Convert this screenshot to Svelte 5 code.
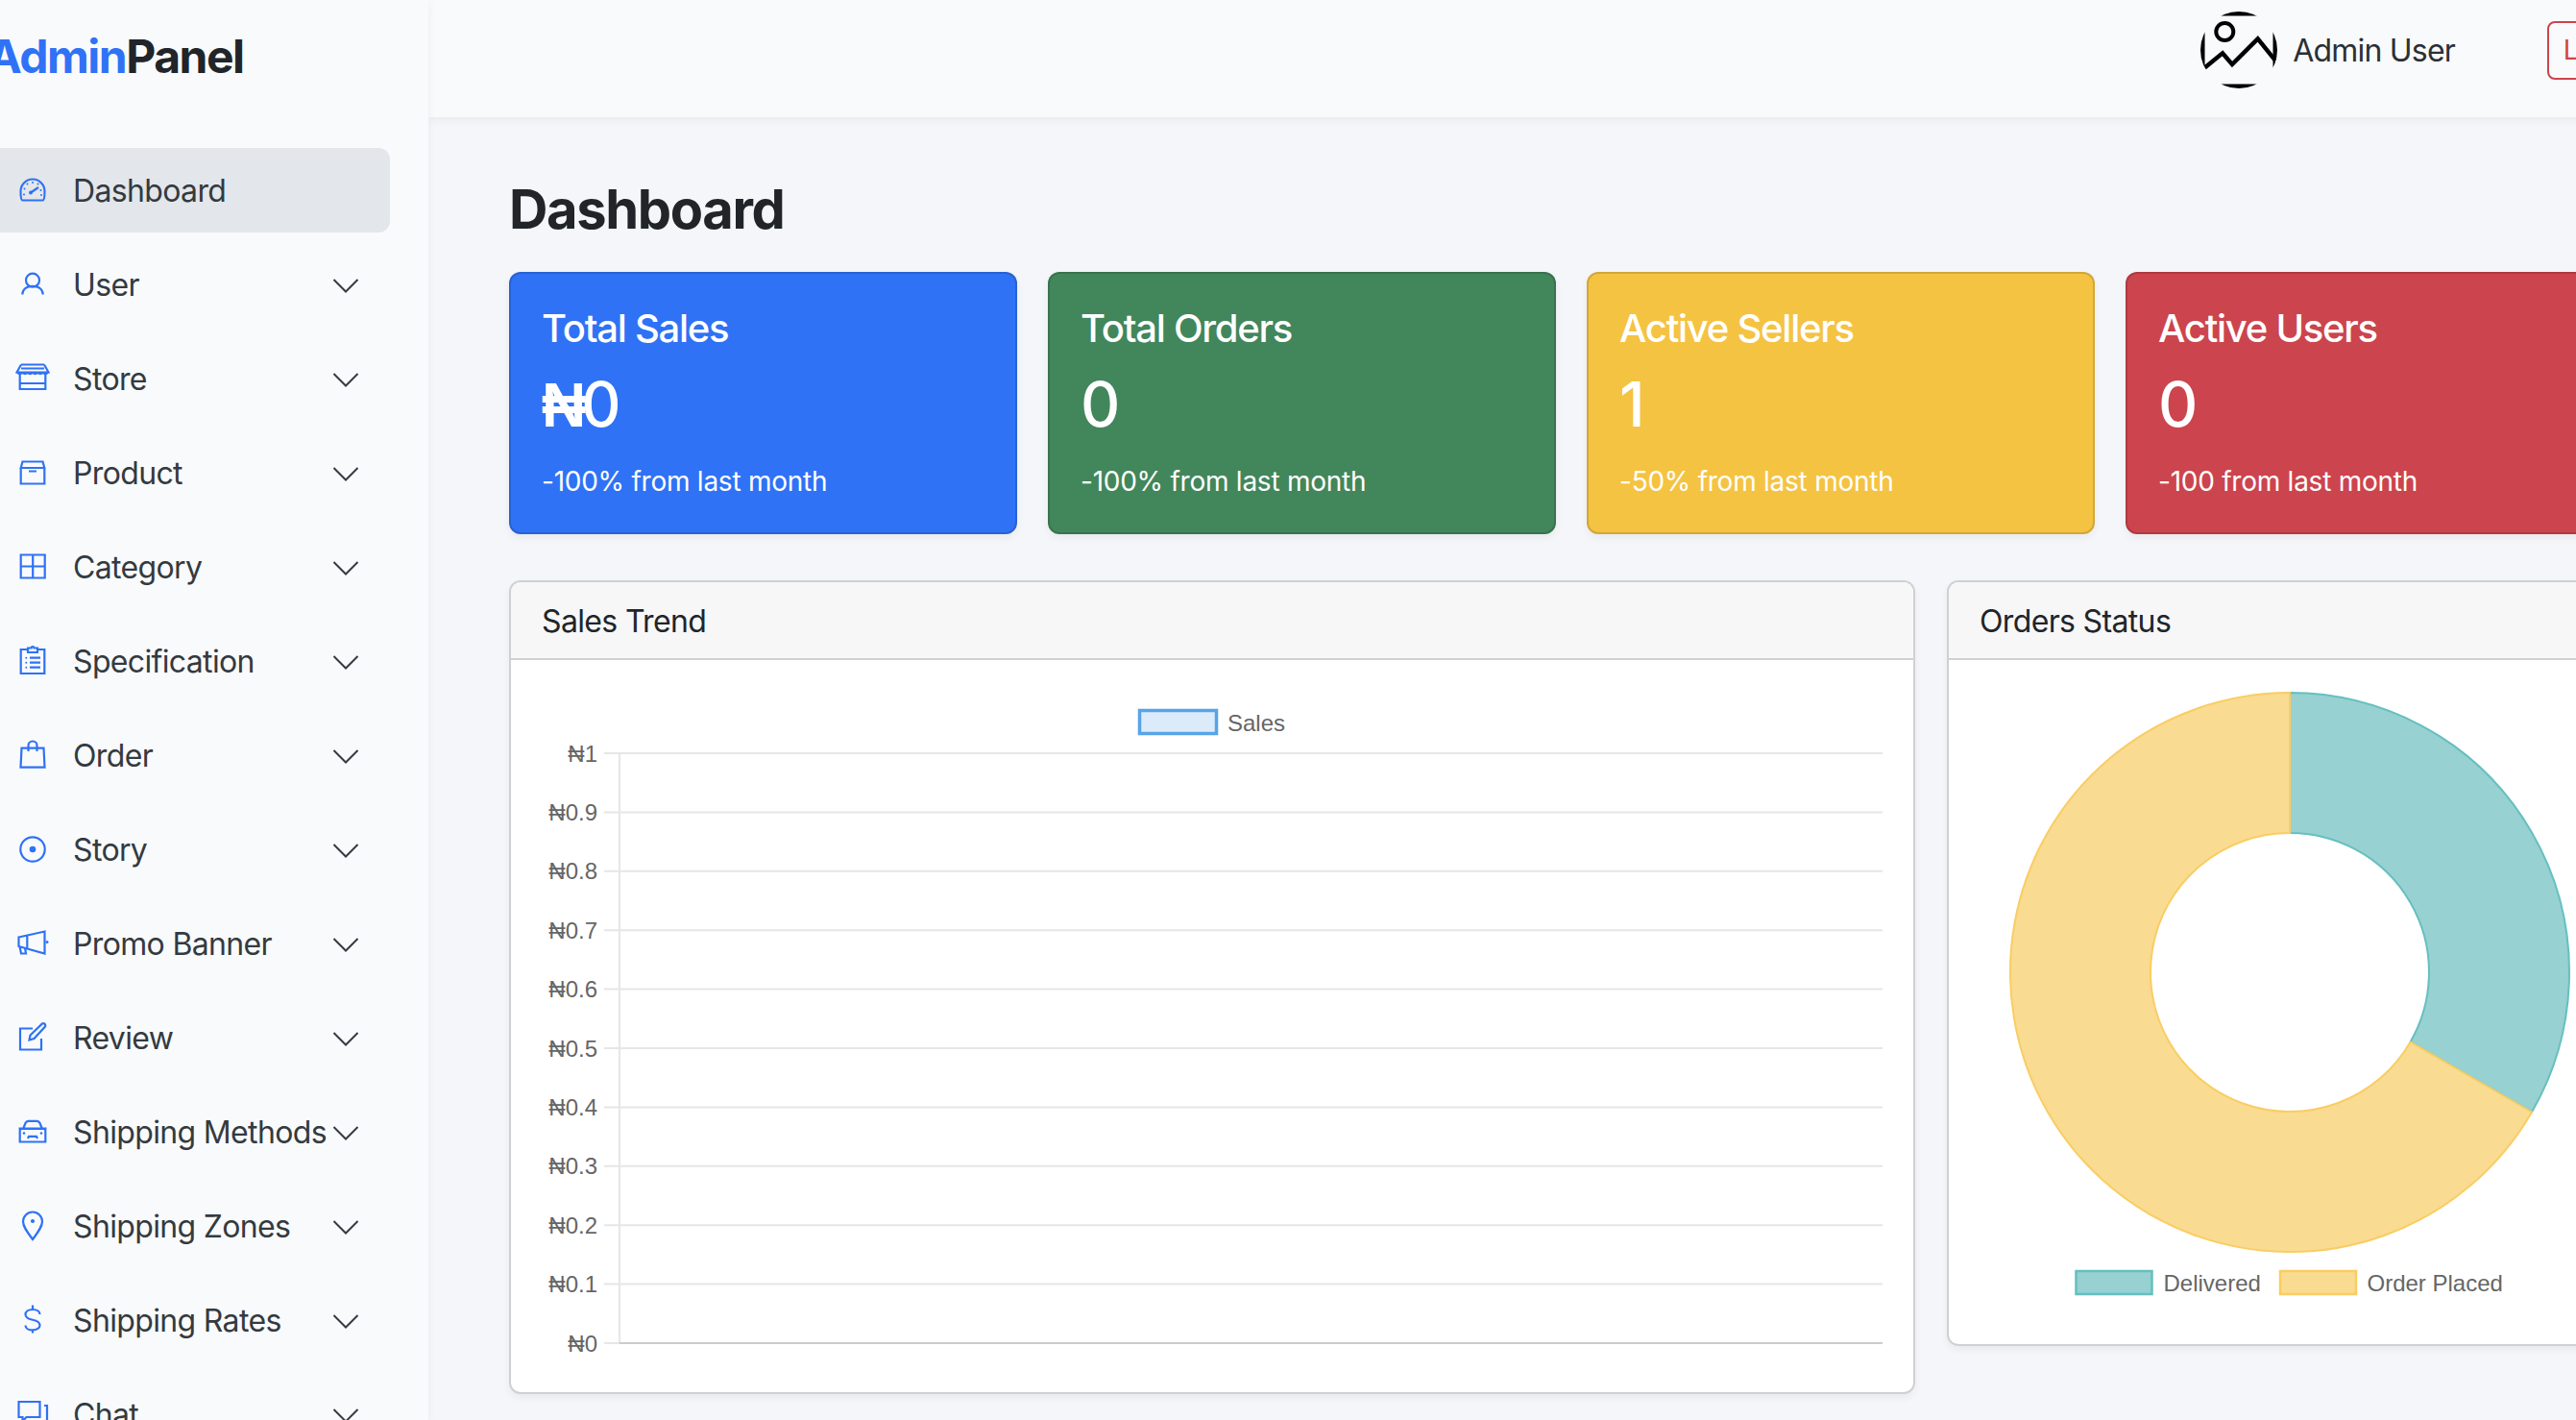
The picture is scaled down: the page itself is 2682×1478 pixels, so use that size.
<script>
  // sidebar entries, the icon paths live in a 36 x 36 box
  const navItems = [
    { label: 'Dashboard', active: true, icon: 'gauge' },
    { label: 'User', icon: 'user' },
    { label: 'Store', icon: 'store' },
    { label: 'Product', icon: 'box' },
    { label: 'Category', icon: 'grid' },
    { label: 'Specification', icon: 'clipboard' },
    { label: 'Order', icon: 'bag' },
    { label: 'Story', icon: 'target' },
    { label: 'Promo Banner', icon: 'megaphone' },
    { label: 'Review', icon: 'pencil' },
    { label: 'Shipping Methods', icon: 'car' },
    { label: 'Shipping Zones', icon: 'pin' },
    { label: 'Shipping Rates', icon: 'dollar' },
    { label: 'Chat', icon: 'chat' }
  ];

  const icons = {
    gauge: 'M7.5 28.5h21c1.5 0 2-3 2-9.5a12.5 12.5 0 1 0-25 0c0 6.5.5 9.5 2 9.5zM16 20.5l8-5.5',
    user: 'M11 13.7a7 7 0 1 0 14 0a7 7 0 1 0-14 0zM7.3 28.5c0-5 4-8.7 10.7-8.7s10.7 3.7 10.7 8.7',
    store: 'M6 3.5h24M6 7.5h24M6 3.5l-4.5 8h33l-4.5-8M2 12q2.7 2.2 5.3 0q2.7 2.2 5.3 0q2.7 2.2 5.4 0q2.7 2.2 5.3 0q2.7 2.2 5.3 0q2.7 2.2 5.4 0M4.7 13v16h26.6V13M5 23h26',
    box: 'M5.7 13v16.5h24.6V13M5.7 13L7.5 6.5h21L30.3 13zM14 16.5h8',
    grid: 'M5.7 5.5h25v24h-25zM18.2 5.5v24M5.7 17.5h25',
    clipboard: 'M13 6H5.7v25h24.6V6H23M13 9V4.5h3.5a1.5 1.5 0 0 1 3 0H23V9zM15 14.7h11M15 19.7h11M15 24.7h11',
    bag: 'M6.5 10.7h23l1 20h-25zM13.5 14V8a4.5 4.5 0 0 1 9 0v6',
    target: 'M5.3 18a12.7 12.7 0 1 0 25.4 0a12.7 12.7 0 1 0-25.4 0z',
    megaphone: 'M3.5 11.5L30.5 5.5V28.5L3.5 21zM12.3 9.5v13.5M4.5 21l1.5 7.5h5L10 22.5',
    pencil: 'M18 8.5H5v22h22V19M14.5 20.5l1-5L28 3.5a2.2 2.2 0 0 1 3 3L19.5 19z',
    car: 'M8 15l2.5-6c.6-1.5 1.5-2.2 3-2.2h9c1.5 0 2.4.7 3 2.2L28 15M3.5 14.5h29M4.7 16.5c0-1 1-1.5 2-1.5h22.6c1 0 2 .5 2 1.5V28.5H4.7zM13 25l1-2.2h8l1 2.2',
    pin: 'M18 32C12 24 8 18.5 8 13.5a10 10 0 0 1 20 0C28 18.5 24 24 18 32z',
    dollar: 'M18 2.5V7M18 27.5v4M25.5 12c0-3-3-5-7.5-5s-7.5 2-7.5 5.2c0 3.5 3 4.6 7.5 5.6s7.5 2.3 7.5 5.6c0 2.8-3.2 5-7.5 5s-7.5-2-7.5-5',
    chat: 'M3.5 5h22v16h-14l-4 4v-4h-4zM30 9h3v16'
  };

  // little filled bits that a stroke cannot do
  const iconDots = {
    gauge: [[18, 10], [12.5, 11.5], [23.5, 11.5], [9.5, 16.5], [26.5, 18], [9, 22.5], [27, 23], [16, 20.5, 2]],
    clipboard: [[11.3, 14.7], [11.3, 19.7], [11.3, 24.7]],
    target: [[18, 18, 3.3]],
    megaphone: [[33, 16.5, 1.5]],
    car: [[9, 19.5, 1.3], [27, 19.5, 1.3]],
    pin: [[18, 13, 2.1]]
  };

  const stats = [
    { title: 'Total Sales', currency: '₦', value: '0', note: '-100% from last month', color: 'blue' },
    { title: 'Total Orders', value: '0', note: '-100% from last month', color: 'green' },
    { title: 'Active Sellers', value: '1', note: '-50% from last month', color: 'yellow' },
    { title: 'Active Users', value: '0', note: '-100 from last month', color: 'red' }
  ];

  const ticks = ['₦1', '₦0.9', '₦0.8', '₦0.7', '₦0.6', '₦0.5', '₦0.4', '₦0.3', '₦0.2', '₦0.1', '₦0'];
  const tickY = (i) => 97 + i * 61.4;

  // donut
  const cx = 355;
  const cy = 325;
  const R = 291;
  const r = 145;

  function slice(from, to) {
    const p = (rad, deg) => {
      const a = (deg * Math.PI) / 180;
      return `${(cx + rad * Math.sin(a)).toFixed(2)} ${(cy - rad * Math.cos(a)).toFixed(2)}`;
    };
    const big = to - from > 180 ? 1 : 0;
    return `M${p(R, from)}A${R} ${R} 0 ${big} 1 ${p(R, to)}L${p(r, to)}A${r} ${r} 0 ${big} 0 ${p(r, from)}Z`;
  }
</script>

<div class="page">
  <div class="shell">
    <aside class="sidebar">
      <div class="logo"><span class="logo-accent">Admin</span>Panel</div>
      <nav>
        {#each navItems as item}
          <div class="nav-row" class:active={item.active}>
            <svg class="nav-icon" viewBox="0 0 36 36" width="36" height="36">
              <path d={icons[item.icon]} />
              {#each iconDots[item.icon] ?? [] as d}
                <circle cx={d[0]} cy={d[1]} r={d[2] ?? 1} />
              {/each}
            </svg>
            <span>{item.label}</span>
            {#if !item.active}
              <svg class="chevron" viewBox="0 0 32 32" width="32" height="32">
                <path d="M3.5 11L16 23.5L28.5 11" />
              </svg>
            {/if}
          </div>
        {/each}
      </nav>
    </aside>

    <main>
      <header>
        <svg class="avatar" viewBox="0 0 80 80" width="80" height="80">
          <defs>
            <clipPath id="avatar-clip"><circle cx="40" cy="40" r="40" /></clipPath>
          </defs>
          <g clip-path="url(#avatar-clip)" fill="none" stroke="#000">
            <rect x="-6" y="-6" width="92" height="92" stroke-width="21" />
            <circle cx="25.3" cy="21" r="9" stroke-width="4" />
            <path d="M2 60.5L23 43.3L33 55L59.7 28.3L82 56" stroke-width="4.5" />
          </g>
        </svg>
        <span class="user-name">Admin User</span>
        <button class="logout">Logout</button>
      </header>

      <section class="content">
        <h1>Dashboard</h1>

        <div class="stats">
          {#each stats as s}
            <div class="stat {s.color}">
              <div class="stat-title">{s.title}</div>
              <div class="stat-value">{#if s.currency}<span class="currency">{s.currency}</span>{/if}{s.value}</div>
              <div class="stat-note">{s.note}</div>
            </div>
          {/each}
        </div>

        <div class="charts">
          <div class="card sales">
            <div class="card-head">Sales Trend</div>
            <svg class="plot" viewBox="0 0 1460 761" width="1460" height="761">
              <rect x="654.5" y="52.5" width="80" height="24" fill="#dcebfa" stroke="#58a4e8" stroke-width="3.5" />
              <text x="746" y="65" class="chart-label" dominant-baseline="central">Sales</text>
              {#each ticks as t, i}
                {#if i < ticks.length - 1}
                  <line x1="97" x2="1428" y1={tickY(i)} y2={tickY(i)} stroke="#e6e6e6" stroke-width="2" />
                {/if}
                <text x="90" y={tickY(i)} class="chart-label" text-anchor="end" dominant-baseline="central">{t}</text>
              {/each}
              <line x1="113" x2="113" y1="97" y2="711" stroke="#e6e6e6" stroke-width="2" />
              <line x1="97" x2="113" y1="711" y2="711" stroke="#e6e6e6" stroke-width="2" />
              <line x1="113" x2="1428" y1="711" y2="711" stroke="#cbcbcb" stroke-width="2" />
            </svg>
          </div>

          <div class="card orders">
            <div class="card-head">Orders Status</div>
            <svg class="plot" viewBox="0 0 711 713" width="711" height="713">
              <path d={slice(0, 120)} fill="#98d1d1" stroke="#66bfc0" stroke-width="2" />
              <path d={slice(120, 360)} fill="#f9db92" stroke="#f9cd62" stroke-width="2" />
              <rect x="132.5" y="636" width="79" height="24" fill="#98d1d1" stroke="#66bfc0" stroke-width="2.5" />
              <text x="223.5" y="648" class="chart-label" dominant-baseline="central">Delivered</text>
              <rect x="345" y="636" width="79" height="24" fill="#f9db92" stroke="#f9cd62" stroke-width="2.5" />
              <text x="435.5" y="648" class="chart-label" dominant-baseline="central">Order Placed</text>
            </svg>
          </div>
        </div>
      </section>
    </main>
  </div>
</div>

<style>
  :global(body) {
    margin: 0;
    background: #f4f6fa;
    font-family: Inter, "Noto Sans", sans-serif;
    color: #212529;
  }

  .page {
    width: 2682px;
    height: 1478px;
    overflow: hidden;
  }

  .shell {
    display: flex;
    width: 2880px;
    height: 1478px;
    margin-left: -54px;
  }

  .sidebar {
    flex: 0 0 500px;
    box-sizing: border-box;
    padding: 0 40px 0 32px;
    background: #f9fafc;
    box-shadow: 0 0 10px rgba(0, 0, 0, 0.05);
    position: relative;
    z-index: 1;
    overflow: hidden;
  }

  .logo {
    height: 154px;
    box-sizing: border-box;
    padding: 30px 0 0 9px;
    font-size: 48px;
    line-height: 58px;
    font-weight: 700;
    letter-spacing: -1.5px;
    color: #212529;
  }

  .logo-accent {
    color: #2f72f5;
  }

  .nav-row {
    display: flex;
    align-items: center;
    height: 88px;
    margin-bottom: 10px;
    padding: 0 30px 0 38px;
    border-radius: 12px;
    font-size: 32px;
    letter-spacing: -0.65px;
    color: #343a40;
    white-space: nowrap;
  }

  .nav-row.active {
    background: #e3e6ea;
  }

  .nav-icon {
    flex: none;
    margin-right: 24px;
    fill: none;
    stroke: #2f72f5;
    stroke-width: 2.2;
  }

  .nav-icon circle {
    fill: #2f72f5;
    stroke: none;
  }

  .chevron {
    flex: none;
    margin-left: auto;
    fill: none;
    stroke: #343a40;
    stroke-width: 2;
  }

  main {
    flex: 0 0 2380px;
  }

  header {
    display: flex;
    align-items: center;
    justify-content: flex-end;
    height: 122px;
    box-sizing: border-box;
    padding: 0 48px 18px 0;
    background: #f9fafc;
    box-shadow: 0 2px 10px rgba(0, 0, 0, 0.06);
  }

  .avatar {
    flex: none;
    margin-right: 16px;
  }

  .user-name {
    font-size: 32px;
    letter-spacing: -0.8px;
    margin-right: 96px;
    color: #2b3035;
  }

  .logout {
    width: 126px;
    height: 61px;
    box-sizing: border-box;
    padding: 0;
    border: 2px solid #cc444d;
    border-radius: 8px;
    background: transparent;
    color: #cc444d;
    font: 400 28px Inter, sans-serif;
  }

  .content {
    padding: 63px 84px 0;
  }

  h1 {
    margin: 0 0 31px;
    font-size: 56px;
    line-height: 67px;
    font-weight: 700;
    letter-spacing: -1.35px;
    color: #212529;
  }

  .stats {
    display: flex;
    gap: 32px;
    margin-bottom: 48px;
  }

  .stat {
    flex: 0 0 529px;
    height: 273px;
    box-sizing: border-box;
    padding: 33px 32px 0;
    border: 2px solid rgba(0, 0, 0, 0.14);
    border-radius: 12px;
    color: #fff;
    box-shadow: 0 4px 8px rgba(0, 0, 0, 0.05);
  }

  .blue { background: #2f72f5; }
  .green { background: #42865b; }
  .yellow { background: #f5c342; }
  .red { background: #cc444d; }

  .stat-title {
    font-size: 40px;
    line-height: 48px;
    font-weight: 500;
    letter-spacing: -1.25px;
  }

  .stat-value {
    margin-top: 16px;
    font-size: 64px;
    line-height: 77px;
    font-weight: 500;
  }

  .currency {
    font-family: "Liberation Sans", Arial, sans-serif;
    font-weight: 700;
    line-height: 0;
    letter-spacing: -5px;
  }

  .stat-note {
    margin-top: 21px;
    font-size: 28px;
    line-height: 42px;
    letter-spacing: -0.25px;
  }

  .charts {
    display: flex;
    align-items: flex-start;
    gap: 33px;
  }

  .card {
    box-sizing: border-box;
    border: 2px solid #d0d0d2;
    border-radius: 12px;
    background: #fff;
    overflow: hidden;
    box-shadow: 0 4px 8px rgba(0, 0, 0, 0.05);
  }

  .sales {
    flex: 0 0 1464px;
    height: 847px;
  }

  .orders {
    flex: 0 0 715px;
    height: 797px;
  }

  .card-head {
    height: 81px;
    box-sizing: border-box;
    padding: 0 32px;
    border-bottom: 2px solid #d0d0d2;
    background: #f7f7f8;
    font-size: 32px;
    line-height: 81px;
    letter-spacing: -0.65px;
    color: #212529;
  }

  .plot {
    display: block;
  }

  .chart-label {
    font-family: "Liberation Sans", Arial, sans-serif;
    font-size: 24px;
    fill: #666;
  }
</style>
